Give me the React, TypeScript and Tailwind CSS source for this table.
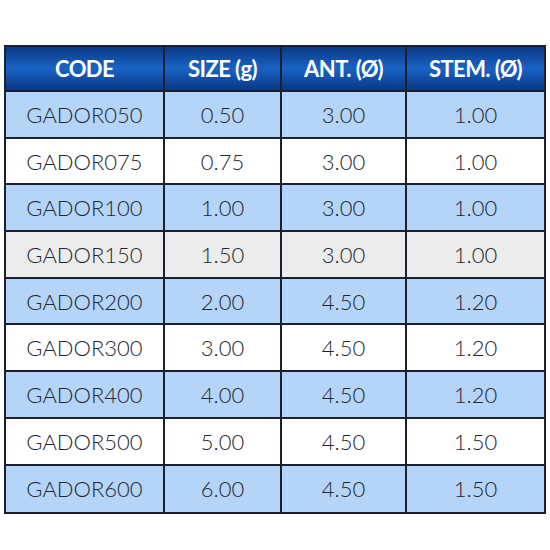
const headers = ['CODE', 'SIZE (g)', 'ANT. (Ø)', 'STEM. (Ø)']

const rows = [
  ['GADOR050', '0.50', '3.00', '1.00'],
  ['GADOR075', '0.75', '3.00', '1.00'],
  ['GADOR100', '1.00', '3.00', '1.00'],
  ['GADOR150', '1.50', '3.00', '1.00'],
  ['GADOR200', '2.00', '4.50', '1.20'],
  ['GADOR300', '3.00', '4.50', '1.20'],
  ['GADOR400', '4.00', '4.50', '1.20'],
  ['GADOR500', '5.00', '4.50', '1.50'],
  ['GADOR600', '6.00', '4.50', '1.50'],
]

// row backgrounds as in the sheet: blue / white, one grey row
const rowBg = [
  'bg-[#b4d5f8]',
  'bg-white',
  'bg-[#b4d5f8]',
  'bg-[#ececec]',
  'bg-[#b4d5f8]',
  'bg-white',
  'bg-[#b4d5f8]',
  'bg-white',
  'bg-[#b4d5f8]',
]

const cols = 'grid grid-cols-[157px_117px_125px_139px]'

export default function App() {
  return (
    <div className="w-[550px] h-[550px] bg-white pt-[45px] pl-[4px]" style={{ fontFamily: 'Lato, "Liberation Sans", sans-serif' }}>
      <div className="w-[542px] border-2 border-[#1b1f2e]">
        {/* header */}
        <div className={`${cols} h-[45px] bg-gradient-to-b from-[#0a3a86] via-[#1a63c4] to-[#0a3884] border-b-2 border-[#1b1f2e]`}>
          {headers.map((h, i) => (
            <div
              key={h}
              className={`flex items-center justify-center text-white font-bold text-[22px] tracking-[-0.6px] ${i > 0 ? 'border-l-2 border-[#1b1f2e]' : ''}`}
            >
              {h}
            </div>
          ))}
        </div>

        {rows.map((r, i) => (
          <div
            key={r[0]}
            className={`${cols} h-[46.7px] ${rowBg[i]} ${i < rows.length - 1 ? 'border-b-2 border-[#1b1f2e]' : ''}`}
          >
            {r.map((cell, j) => (
              <div
                key={j}
                className={`flex items-center justify-center text-[22px] font-light text-[#1f2631] ${j > 0 ? 'border-l-2 border-[#1b1f2e]' : ''}`}
              >
                {cell}
              </div>
            ))}
          </div>
        ))}
      </div>
    </div>
  )
}
